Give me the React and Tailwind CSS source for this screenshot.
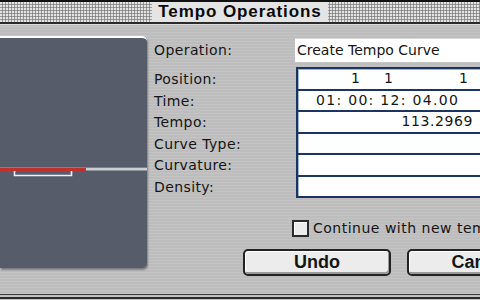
export default function App() {
  const rows = [
    { label: "Position:", content: "pos" },
    { label: "Time:", content: "time" },
    { label: "Tempo:", content: "tempo" },
    { label: "Curve Type:", content: "" },
    { label: "Curvature:", content: "" },
    { label: "Density:", content: "" },
  ];
  return (
    <div className="w-[480px] h-[300px] overflow-hidden bg-[#bdbdbd] bg-[repeating-linear-gradient(0deg,rgba(255,255,255,0.10)_0px,rgba(255,255,255,0.10)_1px,transparent_1px,transparent_3px)] flex flex-col font-['DejaVu_Sans',sans-serif] text-[14px] text-[#151515]">
      {/* title bar */}
      <div className="h-[2px] bg-[#111]" />
      <div className="h-[20px] bg-[#e4e4e4] bg-[radial-gradient(#7d7d7d_0.9px,transparent_1.3px)] bg-[length:3px_3px] bg-[position:1px_1px] flex justify-center">
        <div className="bg-[#e4e4e4] px-[6px] font-['Liberation_Sans',sans-serif] font-bold text-[17px] leading-[20px] tracking-[0.9px] text-[#0a0a0a]">
          Tempo Operations
        </div>
      </div>
      <div className="h-[2px] bg-[#2b2b2b]" />
      <div className="h-[1px] bg-[#dcdcdc]" />

      {/* body */}
      <div className="flex-1 flex flex-col">
        <div className="flex">
          {/* left graph panel */}
          <div className="shrink-0 mt-[11px] w-[147px] h-[232px] rounded-r-[5px] bg-[#575c6b] border-t-[2px] border-white shadow-[1px_2px_2px_rgba(0,0,0,0.35)] relative">
            <svg width="147" height="40" className="absolute left-0 top-[128px]">
              <rect x="0" y="1" width="147" height="1" fill="#6d8790" />
              <rect x="0" y="2" width="86" height="3" fill="#c0302d" />
              <rect x="86" y="2" width="61" height="2.5" fill="#cbced2" />
              <path d="M14.5 5 V9.5 H71.5 V5" fill="none" stroke="#f2f2f2" strokeWidth="1.6" />
            </svg>
          </div>

          {/* right form */}
          <div className="ml-[7px] flex-1 min-w-0 flex flex-col">
            <div className="mt-[13px] h-[24px] flex items-center">
              <div className="w-[141px] shrink-0 tracking-[0.4px]">Operation:</div>
              <div className="flex-1 h-[24px] bg-white border-t border-[#d8d8d8] flex items-center pl-[2px] whitespace-nowrap">
                Create Tempo Curve
              </div>
            </div>
            <div className="mt-[5px] flex">
              <div className="w-[142px] shrink-0 flex flex-col pt-[2px]">
                {rows.map((r) => (
                  <div key={r.label} className="h-[21.5px] flex items-center tracking-[0.4px] whitespace-nowrap">
                    {r.label}
                  </div>
                ))}
              </div>
              <div className="flex-1 bg-white border-l-2 border-t-2 border-[#1c3461] flex flex-col shadow-[inset_1px_1px_0_#9fb6d0]">
                {rows.map((r) => (
                  <div
                    key={r.label}
                    className="h-[21.5px] border-b-2 border-[#1c3461] flex items-center whitespace-nowrap"
                  >
                    {r.content === "pos" && (
                      <div className="flex">
                        <span className="w-[62px] text-right">1</span>
                        <span className="w-[33px] text-right">1</span>
                        <span className="w-[75px] text-right">1</span>
                      </div>
                    )}
                    {r.content === "time" && (
                      <span className="pl-[18px] tracking-[1.3px]">01: 00: 12: 04.00</span>
                    )}
                    {r.content === "tempo" && (
                      <span className="w-[175px] text-right tracking-[0.6px]">113.2969</span>
                    )}
                  </div>
                ))}
              </div>
            </div>
            <div className="mt-[22px] h-[17px] flex items-center pl-[138px]">
              <div className="shrink-0 w-[17px] h-[17px] border-2 border-[#2a2a2a] bg-[#ececec] shadow-[inset_1px_1px_0_#fff]" />
              <span className="ml-[4px] whitespace-nowrap tracking-[0.5px]">Continue with new tempo</span>
            </div>
            <div className="mt-[12px] flex gap-[16px] pl-[89px]">
              <div className="w-[148px] shrink-0 h-[27px] rounded-[5px] border-2 border-[#222] bg-[#ececec] shadow-[inset_-1px_-2px_0_#9a9a9a,inset_1px_1px_0_#fff] flex items-center justify-center font-['Liberation_Sans',sans-serif] font-bold text-[18px]">
                Undo
              </div>
              <div className="w-[148px] shrink-0 h-[27px] rounded-[5px] border-2 border-[#222] bg-[#ececec] shadow-[inset_-1px_-2px_0_#9a9a9a,inset_1px_1px_0_#fff] flex items-center justify-center font-['Liberation_Sans',sans-serif] font-bold text-[18px]">
                Cancel
              </div>
            </div>
          </div>
        </div>
        <div className="mt-auto mb-[5px] h-[1px] bg-[#3a3a3a]" />
      </div>
      <div className="h-[2px] bg-[#2b2b2b] -mt-[3px] mb-[1px]" />
    </div>
  );
}
